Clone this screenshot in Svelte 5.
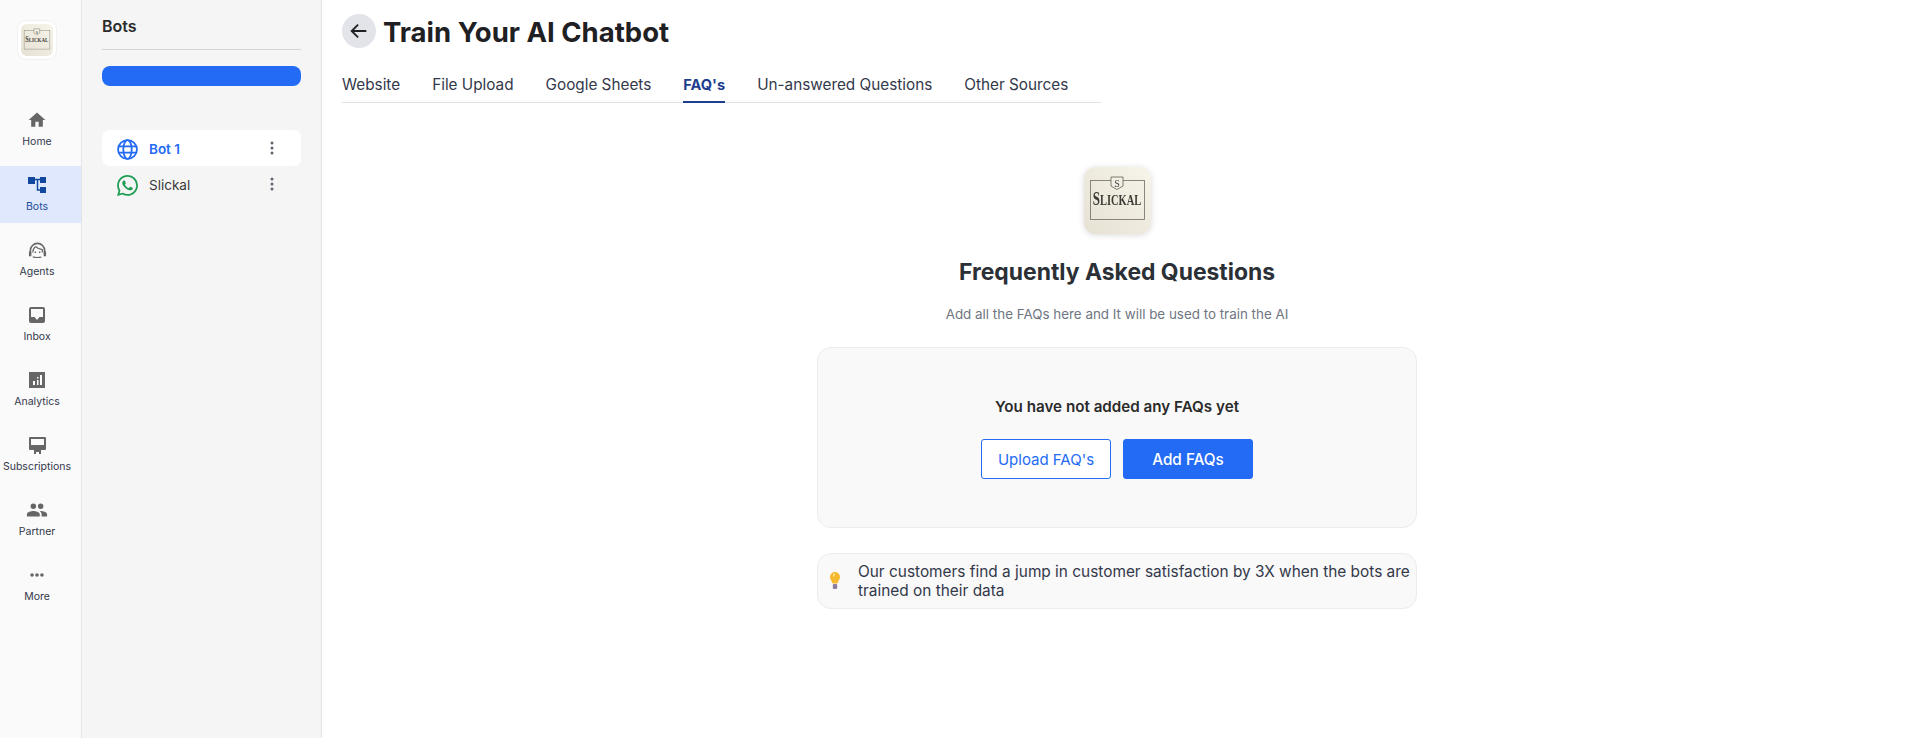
<script>
  const nav = ['Home','Bots','Agents','Inbox','Analytics','Subscriptions','Partner','More'];
  const tabs = ["Website","File Upload","Google Sheets","FAQ's","Un-answered Questions","Other Sources"];
</script>

{#snippet mark(w)}
  <svg viewBox="0 0 67 67" width={w} height={w} class="mark">
    <defs>
      <linearGradient id="g{w}" x1="1" y1="0" x2="0" y2="1">
        <stop offset="0" stop-color="#f7f4ea"/><stop offset="1" stop-color="#e6e1d3"/>
      </linearGradient>
    </defs>
    <rect width="67" height="67" rx="12" fill="url(#g{w})"/>
    <rect x="6.500" y="13.500" width="54" height="39" fill="none" stroke="#6f6d62" stroke-width="0.8"/>
    <path d="M27 10h12v9l-6 3.500-6-3.500z" fill="#f2efe4" stroke="#5f5d54" stroke-width="0.8"/>
    <text x="33" y="20" text-anchor="middle" font-size="10" font-family="Liberation Serif, serif" fill="#444">S</text>
    <text transform="translate(33 38) scale(.72 1)" text-anchor="middle" font-weight="700" font-family="Liberation Serif, serif" fill="#3c3b36" font-size="14.500"><tspan font-size="18">S</tspan>LICKAL</text>
  </svg>
{/snippet}

{#snippet icon(name)}
  {#if name==='Home'}
    <svg viewBox="0 0 24 24" width="20" height="20"><path fill="currentColor" d="M10 20v-6h4v6h5v-8h3L12 3 2 12h3v8z"/></svg>
  {:else if name==='Bots'}
    <svg viewBox="0 0 18 16" width="18" height="16"><path fill="currentColor" d="M0 0h7v7H0zM12 0h6v6h-6zM12 10h6v6h-6z"/><path fill="none" stroke="currentColor" stroke-width="1.500" d="M7 2.500h5M9.500 2.500V13H12"/></svg>
  {:else if name==='Agents'}
    <svg viewBox="0 0 20 20" width="19" height="19" fill="none" stroke="currentColor"><path stroke-width="1.700" d="M2.500 14v-4a7.500 7.500 0 0 1 15 0v4"/><path stroke-width="1.300" d="M5 12c0-3 2-5.500 3-6 1 1 3 2 7 3v3"/><path fill="currentColor" stroke="none" d="M1 11h2.500v5H1zM16.500 11H19v5h-2.500zM7 11h1.500v1.500H7zM11.500 11H13v1.500h-1.500z"/><path stroke-width="1.200" d="M5 16.500c2 1 6 1 9 .5"/></svg>
  {:else if name==='Inbox'}
    <svg viewBox="0 0 16 16" width="16" height="16"><path fill="currentColor" fill-rule="evenodd" d="M2 0h12a2 2 0 0 1 2 2v12a2 2 0 0 1-2 2H2a2 2 0 0 1-2-2V2a2 2 0 0 1 2-2zm0 2v8h3.500l2.500 3 2.500-3H14V2z"/></svg>
  {:else if name==='Analytics'}
    <svg viewBox="0 0 16 16" width="16" height="16"><path fill="currentColor" fill-rule="evenodd" d="M0 0h16v16H0zm4 9v4h2V9zm4-1v5h1.500V8zm0-3v1.500h1.500V5zm3-2v10h2V3z"/></svg>
  {:else if name==='Subscriptions'}
    <svg viewBox="0 0 17 17" width="17" height="17"><path fill="currentColor" fill-rule="evenodd" d="M1 0h15a1 1 0 0 1 1 1v11a1 1 0 0 1-1 1h-4v4h-2v-2H7v2H5v-4H1a1 1 0 0 1-1-1V1a1 1 0 0 1 1-1zm1 2v6h13V2z"/></svg>
  {:else if name==='Partner'}
    <svg viewBox="0 0 24 24" width="22" height="22"><path fill="currentColor" d="M16 11a3 3 0 1 0 0-6 3 3 0 0 0 0 6zm-8 0a3 3 0 1 0 0-6 3 3 0 0 0 0 6zm0 2c-2.300 0-7 1.200-7 3.500V19h14v-2.500C15 14.200 10.300 13 8 13zm8 0h-1c1.200.9 2 2 2 3.500V19h6v-2.500c0-2.300-4.700-3.500-7-3.500z"/></svg>
  {:else}
    <svg viewBox="0 0 20 20" width="18" height="18"><circle cx="4.500" cy="10" r="2" fill="currentColor"/><circle cx="10" cy="10" r="2" fill="currentColor"/><circle cx="15.500" cy="10" r="2" fill="currentColor"/></svg>
  {/if}
{/snippet}

{#snippet dots()}
  <svg class="dots" viewBox="0 0 4 14" width="4" height="14"><circle cx="2" cy="2" r="1.500"/><circle cx="2" cy="7" r="1.500"/><circle cx="2" cy="12" r="1.500"/></svg>
{/snippet}

<div class="page">
  <nav class="rail">
    <div class="logo-box">{@render mark(32)}</div>
    <ul class="nav">
      {#each nav as n}
        <li class:active={n==='Bots'}>
          <span class="ic">{@render icon(n)}</span>
          <span class="lbl">{n}</span>
        </li>
      {/each}
    </ul>
  </nav>

  <aside class="panel">
    <h2>Bots</h2>
    <div class="create"></div>
    <div class="bots">
      <div class="bot sel">
        <svg viewBox="0 0 20 20" width="21" height="21" fill="none" stroke="#236bf5" stroke-width="1.700">
          <circle cx="10" cy="10" r="9"/><ellipse cx="10" cy="10" rx="4" ry="9"/><path d="M1.500 7h17M1.500 13h17"/>
        </svg>
        <span class="name">Bot 1</span>
        {@render dots()}
      </div>
      <div class="bot">
        <svg viewBox="0 0 24 24" width="21" height="21"><path fill="#1f9d55" d="M17.470 14.380c-.3-.15-1.760-.87-2.030-.97-.27-.1-.47-.15-.67.15-.2.300-.77.970-.94 1.170-.17.200-.35.220-.65.070-.3-.15-1.260-.46-2.390-1.470-.88-.79-1.480-1.760-1.650-2.060-.17-.3-.02-.46.130-.61.130-.13.300-.35.450-.52.150-.17.200-.3.300-.5.100-.2.050-.37-.02-.52-.08-.15-.67-1.620-.92-2.220-.24-.58-.49-.5-.67-.51h-.57c-.2 0-.52.07-.79.370-.27.300-1.040 1.020-1.040 2.480s1.070 2.880 1.220 3.080c.15.200 2.100 3.200 5.080 4.480.71.310 1.260.49 1.690.63.710.23 1.360.2 1.870.12.570-.09 1.760-.72 2.010-1.410.25-.69.250-1.290.17-1.410-.07-.13-.27-.2-.57-.35zM12.050 21.790h0a9.900 9.900 0 0 1-5.030-1.380l-.36-.21-3.740.98 1-3.650-.24-.37A9.860 9.860 0 0 1 2.170 12c0-5.450 4.440-9.880 9.890-9.880 2.640 0 5.120 1.030 6.990 2.900A9.830 9.830 0 0 1 21.940 12c0 5.450-4.440 9.790-9.890 9.790zM20.520 3.450A11.820 11.820 0 0 0 12.050 0C5.500 0 .16 5.340.16 11.890c0 2.090.55 4.140 1.590 5.940L.06 24l6.310-1.650a11.880 11.880 0 0 0 5.680 1.450h.01c6.550 0 11.890-5.340 11.890-11.890a11.800 11.800 0 0 0-3.430-8.460z"/></svg>
        <span class="name">Slickal</span>
        {@render dots()}
      </div>
    </div>
  </aside>

  <main>
    <header>
      <button class="back" aria-label="Back">
        <svg viewBox="0 0 24 24" width="22" height="22" fill="none" stroke="#1f2023" stroke-width="2"><path d="M20 12H4.500M11 5l-7 7 7 7"/></svg>
      </button>
      <h1>Train Your AI Chatbot</h1>
    </header>
    <div class="tabs">
      {#each tabs as t}
        <span class="tab" class:on={t==="FAQ's"}>{t}</span>
      {/each}
    </div>
    <section class="center">
      <div class="big">{@render mark(67)}</div>
      <h3>Frequently Asked Questions</h3>
      <p class="sub">Add all the FAQs here and It will be used to train the AI</p>
      <div class="card">
        <p class="none">You have not added any FAQs yet</p>
        <div class="btns">
          <button class="btn ghost">Upload FAQ's</button>
          <button class="btn solid">Add FAQs</button>
        </div>
      </div>
      <div class="tip">
        <svg viewBox="0 0 12 20" width="12" height="20"><path fill="#f5b82e" d="M6 1a5 5 0 0 1 5 5c0 2.500-2 3.800-2.500 6.500h-5C3 9.800 1 8.500 1 6a5 5 0 0 1 5-5z"/><path fill="#ffe08a" d="M4 3.500a2 2 0 0 1 2-1v2L4 6z"/><rect x="3.800" y="13" width="4.400" height="5" rx="1" fill="#8d7fa3"/></svg>
        <span>Our customers find a jump in customer satisfaction by 3X when the bots are trained on their data</span>
      </div>
    </section>
  </main>
</div>

<style>
  :global(body){margin:0;background:#fff;font-family:"Inter","Noto Sans",sans-serif;color:#2b2b2b;}
  .page{display:flex;height:738px;overflow:hidden;}
  .rail{width:81px;flex:none;background:#fafafa;border-right:1px solid #e4e4e7;display:flex;flex-direction:column;align-items:center;}
  .logo-box{width:40px;height:40px;margin:20px 7px 0 0;background:#fff;border-radius:9px;border:1px solid #f1f1f1;box-sizing:border-box;display:flex;align-items:center;justify-content:center;flex:none;}
  .nav{list-style:none;margin:41px 0 0;padding:0;width:100%;display:flex;flex-direction:column;gap:8px;}
  .nav li{height:57px;display:flex;flex-direction:column;align-items:center;padding:8px 7px 0 0;box-sizing:border-box;color:#666;}
  .nav li.active{background:#dfe8fd;color:#11479e;}
  .ic{height:22px;display:flex;align-items:center;}
  .lbl{font-size:10.500px;line-height:14px;margin-top:4px;color:#33384a;white-space:nowrap;}
  .active .lbl{color:#1e4a9e;}
  .panel{flex:none;background:#f5f5f5;border-right:1px solid #e4e4e7;padding:0 20px;box-sizing:content-box;width:199px;}
  h2{margin:0;font-size:16px;font-weight:600;height:49px;line-height:52px;border-bottom:1px solid #d4d4d4;color:#2b2b2b;}
  .create{height:20px;margin-top:16px;background:#236bf5;border-radius:8px;}
  .bots{margin-top:44px;}
  .bot{height:36px;display:flex;align-items:center;padding:2px 27px 0 15px;border-radius:7px;font-size:13.500px;color:#3a3a3a;box-sizing:border-box;}
  .bot.sel{background:#fff;color:#236bf5;font-weight:600;}
  .name{margin-left:11px;flex:1;}
  .dots{fill:#5f6470;margin-top:-3px;}
  main{flex:1;padding:14px 0 0 20px;min-width:0;}
  header{display:flex;align-items:center;gap:7px;height:34px;}
  .back{width:34px;height:34px;border-radius:50%;border:0;background:#e2e4e9;padding:0;display:flex;align-items:center;justify-content:center;}
  h1{margin:2px 0 0;font-size:27.500px;font-weight:700;color:#1f2023;}
  .tabs{display:flex;gap:32px;width:759px;margin-top:20px;border-bottom:1px solid #e2e2e2;height:34px;}
  .tab{font-size:15.300px;line-height:34px;height:34px;color:#33384a;white-space:nowrap;}
  .tab.on{color:#1e3f8f;font-weight:700;font-size:14.600px;border-bottom:2px solid #1e3f8f;box-sizing:content-box;height:33px;}
  .center{width:600px;margin:64px 0 0 475px;display:flex;flex-direction:column;align-items:center;}
  .big{height:67px;filter:drop-shadow(0 1px 3px rgba(0,0,0,.15));}
  h3{margin:24px 0 0;font-size:22.900px;line-height:28px;font-weight:700;color:#2b3036;}
  .sub{margin:19px 0 0;font-size:13.400px;line-height:18px;color:#6f7682;}
  .card{width:100%;box-sizing:border-box;height:181px;margin-top:24px;background:#f9f9f9;border:1px solid #ececec;border-radius:14px;display:flex;flex-direction:column;align-items:center;padding-top:49px;}
  .none{margin:0;font-size:15.200px;line-height:20px;font-weight:600;color:#2b2b2b;}
  .btns{display:flex;gap:12px;margin-top:22px;}
  .btn{width:130px;height:40px;border-radius:3px;font:500 15.300px "Inter",sans-serif;box-sizing:border-box;}
  .ghost{background:#fff;border:1px solid #236bf5;color:#236bf5;font-weight:400;font-size:15px;}
  .solid{background:#236bf5;border:1px solid #236bf5;color:#fff;}
  .tip{width:100%;box-sizing:border-box;margin-top:25px;height:56px;background:#f9f9f9;border:1px solid #ececec;border-radius:14px;display:flex;align-items:center;padding:0 4px 0 11px;gap:17px;font-size:15.400px;line-height:19px;color:#33384a;}
  .tip svg{flex:none;}
</style>
